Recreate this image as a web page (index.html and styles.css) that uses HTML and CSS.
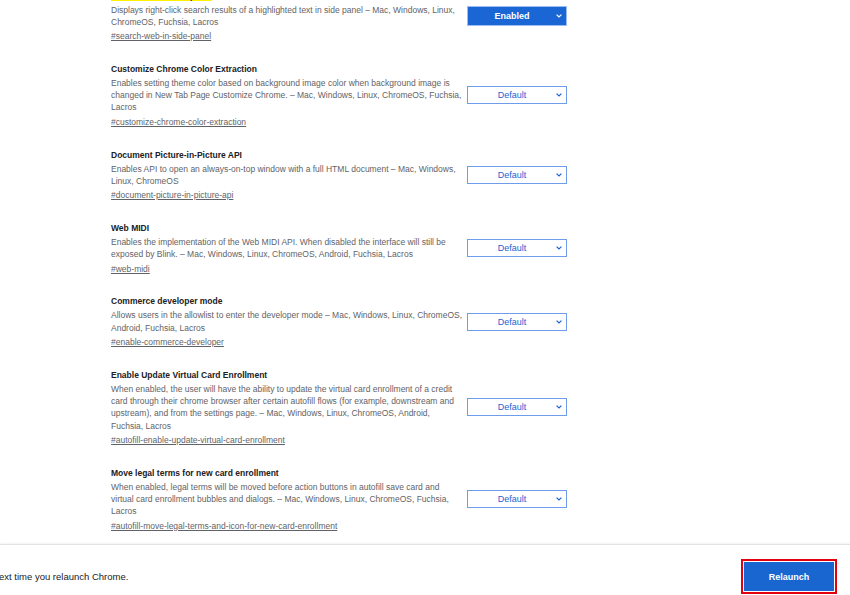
FILE: index.html
```html
<!DOCTYPE html>
<html>
<head>
<meta charset="utf-8">
<link rel="stylesheet" href="styles.css">
</head>
<body>
<main class="list">
  <div class="items">
    <div class="exp">
      <div class="info">
        <div class="title"><mark class="hl">Search web in side panel</mark></div>
        <div class="desc">Displays right-click search results of a highlighted text in side panel – Mac, Windows, Linux,<br>ChromeOS, Fuchsia, Lacros</div>
        <div class="link">#search-web-in-side-panel</div>
      </div>
      <div class="select enabled"><span class="val">Enabled</span><svg class="chev" width="6" height="4" viewBox="0 0 6 4"><path d="M0.6 0.6 L3 3 L5.4 0.6" fill="none" stroke="currentColor" stroke-width="1.2"/></svg></div>
    </div>
    <div class="exp">
      <div class="info">
        <div class="title">Customize Chrome Color Extraction</div>
        <div class="desc">Enables setting theme color based on background image color when background image is<br>changed in New Tab Page Customize Chrome. – Mac, Windows, Linux, ChromeOS, Fuchsia,<br>Lacros</div>
        <div class="link">#customize-chrome-color-extraction</div>
      </div>
      <div class="select"><span class="val">Default</span><svg class="chev" width="6" height="4" viewBox="0 0 6 4"><path d="M0.6 0.6 L3 3 L5.4 0.6" fill="none" stroke="currentColor" stroke-width="1.2"/></svg></div>
    </div>
    <div class="exp">
      <div class="info">
        <div class="title">Document Picture-in-Picture API</div>
        <div class="desc">Enables API to open an always-on-top window with a full HTML document – Mac, Windows,<br>Linux, ChromeOS</div>
        <div class="link">#document-picture-in-picture-api</div>
      </div>
      <div class="select"><span class="val">Default</span><svg class="chev" width="6" height="4" viewBox="0 0 6 4"><path d="M0.6 0.6 L3 3 L5.4 0.6" fill="none" stroke="currentColor" stroke-width="1.2"/></svg></div>
    </div>
    <div class="exp">
      <div class="info">
        <div class="title">Web MIDI</div>
        <div class="desc">Enables the implementation of the Web MIDI API. When disabled the interface will still be<br>exposed by Blink. – Mac, Windows, Linux, ChromeOS, Android, Fuchsia, Lacros</div>
        <div class="link">#web-midi</div>
      </div>
      <div class="select"><span class="val">Default</span><svg class="chev" width="6" height="4" viewBox="0 0 6 4"><path d="M0.6 0.6 L3 3 L5.4 0.6" fill="none" stroke="currentColor" stroke-width="1.2"/></svg></div>
    </div>
    <div class="exp">
      <div class="info">
        <div class="title">Commerce developer mode</div>
        <div class="desc">Allows users in the allowlist to enter the developer mode – Mac, Windows, Linux, ChromeOS,<br>Android, Fuchsia, Lacros</div>
        <div class="link">#enable-commerce-developer</div>
      </div>
      <div class="select"><span class="val">Default</span><svg class="chev" width="6" height="4" viewBox="0 0 6 4"><path d="M0.6 0.6 L3 3 L5.4 0.6" fill="none" stroke="currentColor" stroke-width="1.2"/></svg></div>
    </div>
    <div class="exp">
      <div class="info">
        <div class="title">Enable Update Virtual Card Enrollment</div>
        <div class="desc">When enabled, the user will have the ability to update the virtual card enrollment of a credit<br>card through their chrome browser after certain autofill flows (for example, downstream and<br>upstream), and from the settings page. – Mac, Windows, Linux, ChromeOS, Android,<br>Fuchsia, Lacros</div>
        <div class="link">#autofill-enable-update-virtual-card-enrollment</div>
      </div>
      <div class="select"><span class="val">Default</span><svg class="chev" width="6" height="4" viewBox="0 0 6 4"><path d="M0.6 0.6 L3 3 L5.4 0.6" fill="none" stroke="currentColor" stroke-width="1.2"/></svg></div>
    </div>
    <div class="exp">
      <div class="info">
        <div class="title">Move legal terms for new card enrollment</div>
        <div class="desc">When enabled, legal terms will be moved before action buttons in autofill save card and<br>virtual card enrollment bubbles and dialogs. – Mac, Windows, Linux, ChromeOS, Fuchsia,<br>Lacros</div>
        <div class="link">#autofill-move-legal-terms-and-icon-for-new-card-enrollment</div>
      </div>
      <div class="select"><span class="val">Default</span><svg class="chev" width="6" height="4" viewBox="0 0 6 4"><path d="M0.6 0.6 L3 3 L5.4 0.6" fill="none" stroke="currentColor" stroke-width="1.2"/></svg></div>
    </div>
  </div>
</main>
<footer class="footer">
  <div class="footer-text">ext time you relaunch Chrome.</div>
  <button class="relaunch">Relaunch</button>
</footer>
</body>
</html>
```

FILE: styles.css
```css
* { box-sizing: border-box; }
html, body { margin: 0; padding: 0; }
body {
  width: 850px;
  height: 595px;
  overflow: hidden;
  background: #fff;
  font-family: "Liberation Sans", Arial, sans-serif;
}
.list {
  height: 544px;
  overflow: hidden;
  padding-left: 111px;
}
.items {
  margin-top: -20.5px;
  width: 456px;
}
.exp {
  display: flex;
  align-items: center;
  gap: 0;
  padding: 10px 0 10.5px;
}
.info {
  width: 356px;
  flex: none;
}
.title {
  font-weight: bold;
  font-size: 8.5px;
  line-height: 13px;
  color: #202124;
  margin-bottom: 1px;
}
.hl {
  background: #fff200;
  color: #202124;
  padding: 0;
}
.desc {
  font-size: 8.5px;
  line-height: 12.3px;
  color: #5f6368;
}
.link {
  margin-top: 2px;
  font-size: 8.5px;
  line-height: 12.3px;
  color: #5f6368;
  text-decoration: underline;
}
.select {
  width: 100px;
  height: 18px;
  flex: none;
  display: flex;
  align-items: center;
  padding-right: 4px;
  border: 1px solid #6f9dec;
  color: #1b62d4;
  font-size: 9px;
  background: #fff;
}
.select .val {
  flex: 1;
  text-align: center;
}
.select .chev {
  flex: none;
  display: block;
}
.select.enabled {
  height: 20px;
  background: #1a66d4;
  border-color: #9cbdf2;
  color: #fff;
  font-weight: bold;
}
.footer {
  height: 51px;
  border-top: 1px solid #e2e3e5;
  box-shadow: 0 -1px 2px rgba(0, 0, 0, 0.05);
  display: flex;
  justify-content: space-between;
  align-items: flex-start;
  padding: 17px 16px 0 0;
}
.footer-text {
  font-size: 9.5px;
  line-height: 29px;
  color: #202124;
  margin-left: -1px;
}
.relaunch {
  width: 90px;
  height: 29px;
  border: none;
  border-radius: 0;
  background: #1a66d0;
  color: #fff;
  font-family: "Liberation Sans", Arial, sans-serif;
  font-weight: bold;
  font-size: 9px;
  outline: 2px solid #e3000f;
  outline-offset: 1px;
}
```
